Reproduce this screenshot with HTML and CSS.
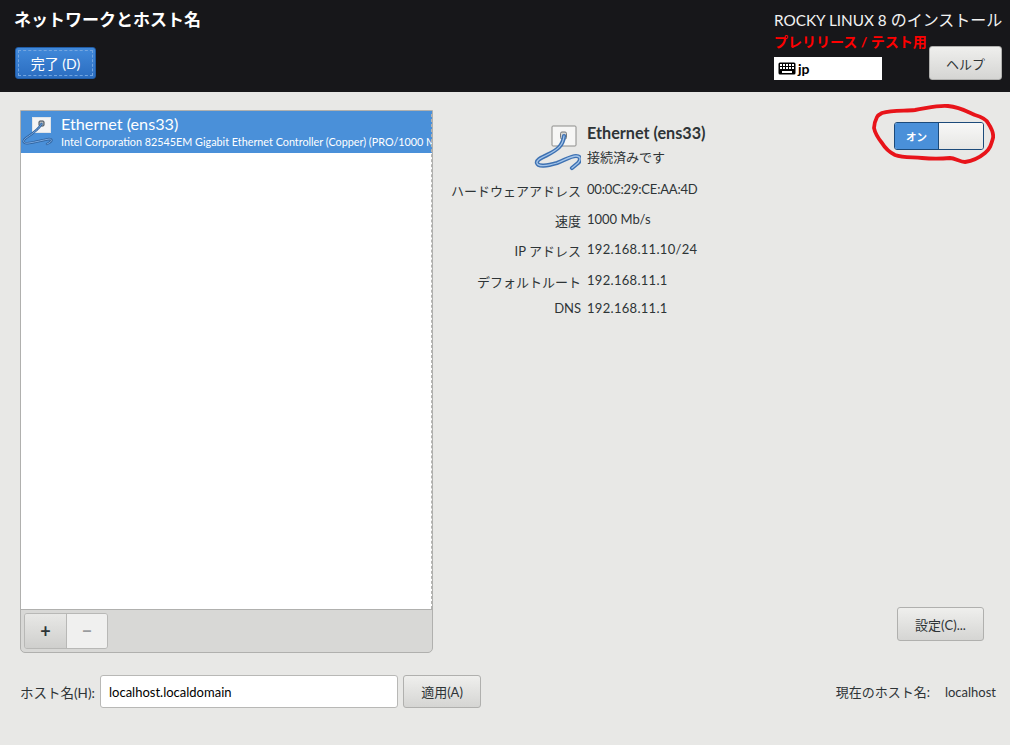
FILE: index.html
```html
<!DOCTYPE html>
<html lang="ja">
<head>
<meta charset="utf-8">
<title>ネットワークとホスト名</title>
<link rel="stylesheet" href="styles.css">
</head>
<body>
<header class="topbar">
  <div class="top-left">
    <h1 class="title">ネットワークとホスト名</h1>
    <button class="btn-done"><span class="done-inner">完了 (D)</span></button>
  </div>
  <div class="top-right">
    <div class="product"><span class="product-latin">ROCKY LINUX 8 </span>のインストール</div>
    <div class="top-right-row">
      <div class="top-right-col">
        <div class="prerelease">プレリリース / テスト用</div>
        <div class="kbd">
          <svg class="kbd-icon" width="18" height="13" viewBox="0 0 18 13"><rect x="0.5" y="0.5" width="17" height="12" rx="1.5" fill="#000"/><g fill="#fff"><rect x="2" y="2" width="2" height="2"/><rect x="5" y="2" width="2" height="2"/><rect x="8" y="2" width="2" height="2"/><rect x="11" y="2" width="2" height="2"/><rect x="14" y="2" width="2" height="2"/><rect x="2" y="5" width="2" height="2"/><rect x="5" y="5" width="2" height="2"/><rect x="8" y="5" width="2" height="2"/><rect x="11" y="5" width="2" height="2"/><rect x="14" y="5" width="2" height="2"/><rect x="4" y="9" width="10" height="2"/></g></svg>
          <span>jp</span>
        </div>
      </div>
      <button class="btn btn-help">ヘルプ</button>
    </div>
  </div>
</header>

<main class="content">
  <div class="columns">
    <section class="panel">
      <div class="list">
        <div class="row-selected">
          <svg class="row-icon" width="32" height="32" viewBox="0 0 32 32">
            <rect x="10.5" y="2.5" width="18" height="15" fill="#f4f4f4" stroke="#dfe4e9"/>
            <rect x="17" y="6" width="5" height="5" rx="1" fill="#b4b9be" stroke="#3c4650"/>
            <path d="M19.5 9 C17 14 10 19 4 23 C0 26 1 29 7 28 C14 27 21 25 27 24 C31 24 30 27 25 29" fill="none" stroke="#2f639f" stroke-width="2.4" stroke-linecap="round"/>
            <path d="M19.5 9 C17 14 10 19 4 23 C0 26 1 29 7 28 C14 27 21 25 27 24 C31 24 30 27 25 29" fill="none" stroke="#79a8df" stroke-width="1" stroke-linecap="round"/>
          </svg>
          <div class="row-text">
            <div class="row-name">Ethernet (ens33)</div>
            <div class="row-desc">Intel Corporation 82545EM Gigabit Ethernet Controller (Copper) (PRO/1000 M</div>
          </div>
        </div>
      </div>
      <div class="toolbar">
        <div class="tool-group">
          <button class="tool tool-add">+</button>
          <button class="tool tool-remove">−</button>
        </div>
      </div>
    </section>

    <section class="detail">
      <div class="detail-top">
        <div class="info">
          <div class="info-icon">
            <svg width="48" height="50" viewBox="0 0 48 50">
              <rect x="19" y="4" width="24" height="20" rx="1" fill="#f6f6f5" stroke="#8c8c8a"/>
              <rect x="27.5" y="10" width="6" height="7" rx="1.5" fill="#d6d6d4" stroke="#77797b"/>
              <path d="M31 14 C30 24 24 28 14 33 C8 36 3 38 4 41 C5 45 14 44 24 41 C32 38 38 34 43 34 C48 34 48 38 45 41 L39 46" fill="none" stroke="#3f72b2" stroke-width="4.2" stroke-linecap="round"/>
              <path d="M31 14 C30 24 24 28 14 33 C8 36 3 38 4 41 C5 45 14 44 24 41 C32 38 38 34 43 34 C48 34 48 38 45 41 L39 46" fill="none" stroke="#a4c5ea" stroke-width="1.3" stroke-linecap="round"/>
            </svg>
          </div>
          <div class="info-head">
            <div class="dev-name">Ethernet (ens33)</div>
            <div class="dev-state">接続済みです</div>
          </div>
          <div class="lab r1">ハードウェアアドレス</div><div class="val val-mac r1">00:0C:29:CE:AA:4D</div>
          <div class="lab r2">速度</div><div class="val r2">1000 Mb/s</div>
          <div class="lab r3">IP アドレス</div><div class="val val-ip r3">192.168.11.10/24</div>
          <div class="lab r4">デフォルトルート</div><div class="val val-ip r4">192.168.11.1</div>
          <div class="lab r5">DNS</div><div class="val val-ip r5">192.168.11.1</div>
        </div>
        <div class="switch-wrap">
          <div class="switch">
            <span class="switch-on">オン</span>
            <span class="switch-knob"></span>
          </div>
          <svg class="scribble" width="125" height="65" viewBox="0 0 125 65"><path d="M12 10 C22 7 34 8 45 7 C58 5 68 2 78 3 C90 4 98 9 105 12 C112 14 116 16 118 20 C122 26 124 30 123 35 C121 42 120 46 115 50 C109 55 102 58 95 59 C90 59 85 55 80 55 C70 56 62 56 52 55 C42 54 33 55 25 52 C19 49 15 45 12 40 C8 35 5 30 4 25 C4 20 6 16 7 14 C8 12 10 11 12 10 Z" fill="none" stroke="#e8141a" stroke-width="3.8" stroke-linejoin="round"/></svg>
        </div>
      </div>
      <div class="detail-bottom">
        <button class="btn btn-config">設定(C)...</button>
      </div>
    </section>
  </div>

  <div class="host-row">
    <label class="host-label">ホスト名(H):</label>
    <div class="host-input">localhost.localdomain</div>
    <button class="btn btn-apply">適用(A)</button>
    <div class="current">
      <span class="current-label">現在のホスト名:</span>
      <span class="current-value">localhost</span>
    </div>
  </div>
</main>
</body>
</html>
```
FILE: styles.css
```css
* { box-sizing: border-box; }
html, body { margin: 0; padding: 0; }
body {
  width: 1010px;
  height: 745px;
  overflow: hidden;
  background: #e8e8e6;
  color: #2e3436;
  font-family: "Lato", "Noto Sans CJK JP", sans-serif;
  font-size: 13px;
  display: flex;
  flex-direction: column;
}
.topbar {
  height: 92px;
  flex: none;
  background: #17171a;
  display: flex;
  justify-content: space-between;
  padding: 0 8px 0 14px;
}
.top-left { display: flex; flex-direction: column; align-items: flex-start; }
.title {
  margin: 10px 0 0;
  font-size: 17px;
  line-height: 20px;
  font-weight: 700;
  color: #fff;
}
.btn-done {
  margin: 17px 0 0 1px;
  width: 81px;
  height: 32px;
  padding: 2px;
  border: 1px solid #205ca6;
  border-radius: 3px;
  background: linear-gradient(#4189da, #2b6dc0);
  color: #fff;
  font: inherit;
  font-size: 14px;
}
.done-inner {
  display: flex;
  height: 100%;
  align-items: center;
  justify-content: center;
  border: 1px dashed #74a6e0;
}
.top-right { width: 228px; display: flex; flex-direction: column; }
.product {
  margin-top: 10px;
  font-size: 16px;
  line-height: 20px;
  color: #f2f2f2;
  white-space: nowrap;
}
.product-latin { font-size: 15.3px; }
.top-right-row { display: flex; justify-content: space-between; }
.top-right-col { display: flex; flex-direction: column; }
.prerelease {
  color: #f00;
  font-weight: 700;
  font-size: 14px;
  line-height: 18px;
  margin-top: 3px;
  white-space: nowrap;
  width: 108px;
}
.kbd {
  margin-top: 6px;
  width: 108px;
  height: 23px;
  background: #fff;
  color: #000;
  display: flex;
  align-items: center;
  gap: 2px;
  padding-left: 4px;
  font-size: 14px;
  font-weight: 700;
}
.btn {
  border: 1px solid #b0b0ae;
  border-radius: 3px;
  background: linear-gradient(#efefed, #d5d5d3);
  color: #2e3436;
  font: inherit;
  font-size: 13px;
  padding: 0;
}
.btn-help {
  width: 73px;
  height: 34px;
  margin-top: 16px;
}
.content {
  flex: 1;
  padding: 18px 0 0 20px;
  display: flex;
  flex-direction: column;
}
.columns { display: flex; height: 543px; }
.panel {
  width: 413px;
  flex: none;
  border: 1px solid #b0b0ae;
  border-radius: 0 0 5px 5px;
  display: flex;
  flex-direction: column;
  background: #d8d8d6;
}
.list {
  flex: 1;
  background: #fff;
  position: relative;
  overflow: hidden;
  border-bottom: 1px solid #b0b0ae;
}
.list::after {
  content: "";
  position: absolute;
  top: 3px;
  bottom: 0;
  right: 0;
  border-right: 1px dashed #b4b4b2;
}
.row-selected {
  height: 42px;
  background: #4a90d9;
  color: #fff;
  display: flex;
  padding: 4px 0 0 1px;
  gap: 7px;
}
.row-icon { flex: none; }
.row-text { min-width: 0; white-space: nowrap; margin-top: -1px; }
.row-name { font-size: 16.2px; line-height: 19px; }
.row-desc { font-size: 10.8px; line-height: 14px; margin-top: 2px; }
.toolbar { height: 42px; flex: none; padding: 3px; }
.tool-group {
  display: inline-flex;
  height: 36px;
  border: 1px solid #b8b8b6;
  border-radius: 3px;
  overflow: hidden;
}
.tool {
  border: 0;
  padding: 0;
  font: inherit;
  font-size: 18px;
  line-height: 1;
  font-weight: 700;
}
.tool-add { width: 42px; background: linear-gradient(#e8e8e6, #cfcfcd); color: #2e3436; border-right: 1px solid #b8b8b6; }
.tool-remove { width: 40px; background: #f0f0ef; color: #9a9c9e; }
.detail {
  flex: 1;
  margin-left: 18px;
  margin-right: 26px;
  display: flex;
  flex-direction: column;
  justify-content: space-between;
}
.detail-top { display: flex; justify-content: space-between; align-items: flex-start; }
.info {
  display: grid;
  grid-template-columns: 130px 200px;
  column-gap: 6px;
  margin-top: 12px;
  white-space: nowrap;
}
.info-icon { display: flex; justify-content: flex-end; height: 60px; }
.info-head { padding-top: 1px; }
.dev-name { font-size: 16.2px; line-height: 19px; font-weight: 700; color: #2e3436; }
.dev-state { font-size: 13px; line-height: 18px; margin-top: 6px; }
.lab { text-align: right; line-height: 18px; }
.val { line-height: 18px; margin-top: -2px; }
.val-mac { letter-spacing: -0.2px; }
.val-ip { letter-spacing: 0.3px; }
.r1 { padding-bottom: 12px; }
.r2 { padding-bottom: 12px; }
.r3 { padding-bottom: 13px; }
.r4 { padding-bottom: 9px; }
.lab.r5, .val.r5 { margin-top: -1px; }
.switch-wrap { position: relative; margin-top: 12px; }
.switch {
  width: 90px;
  height: 28px;
  border: 1px solid #1c4a7a;
  border-radius: 3px;
  display: flex;
  overflow: hidden;
}
.switch-on {
  width: 43px;
  background: #4a90d9;
  color: #fff;
  font-size: 10.5px;
  font-weight: 700;
  display: flex;
  align-items: center;
  justify-content: center;
}
.switch-knob {
  flex: 1;
  border-left: 1px solid #1c4a7a;
  background: linear-gradient(#f8f8f7, #e6e6e4);
}
.scribble { position: absolute; left: -24px; top: -19px; }
.detail-bottom { display: flex; justify-content: flex-end; margin-bottom: 12px; }
.btn-config { width: 87px; height: 34px; }
.host-row {
  display: flex;
  align-items: center;
  margin-top: 22px;
  height: 33px;
  padding-right: 14px;
}
.host-label { width: 80px; flex: none; font-size: 13.5px; white-space: nowrap; }
.host-input {
  width: 298px;
  height: 33px;
  background: #fff;
  border: 1px solid #b8b8b6;
  border-radius: 3px;
  color: #000;
  display: flex;
  align-items: center;
  padding: 0 8px;
  font-size: 13px;
}
.btn-apply { width: 78px; height: 33px; margin-left: 5px; }
.current { margin-left: auto; display: flex; gap: 15px; align-items: center; }
.current-value { font-size: 13px; }
```
